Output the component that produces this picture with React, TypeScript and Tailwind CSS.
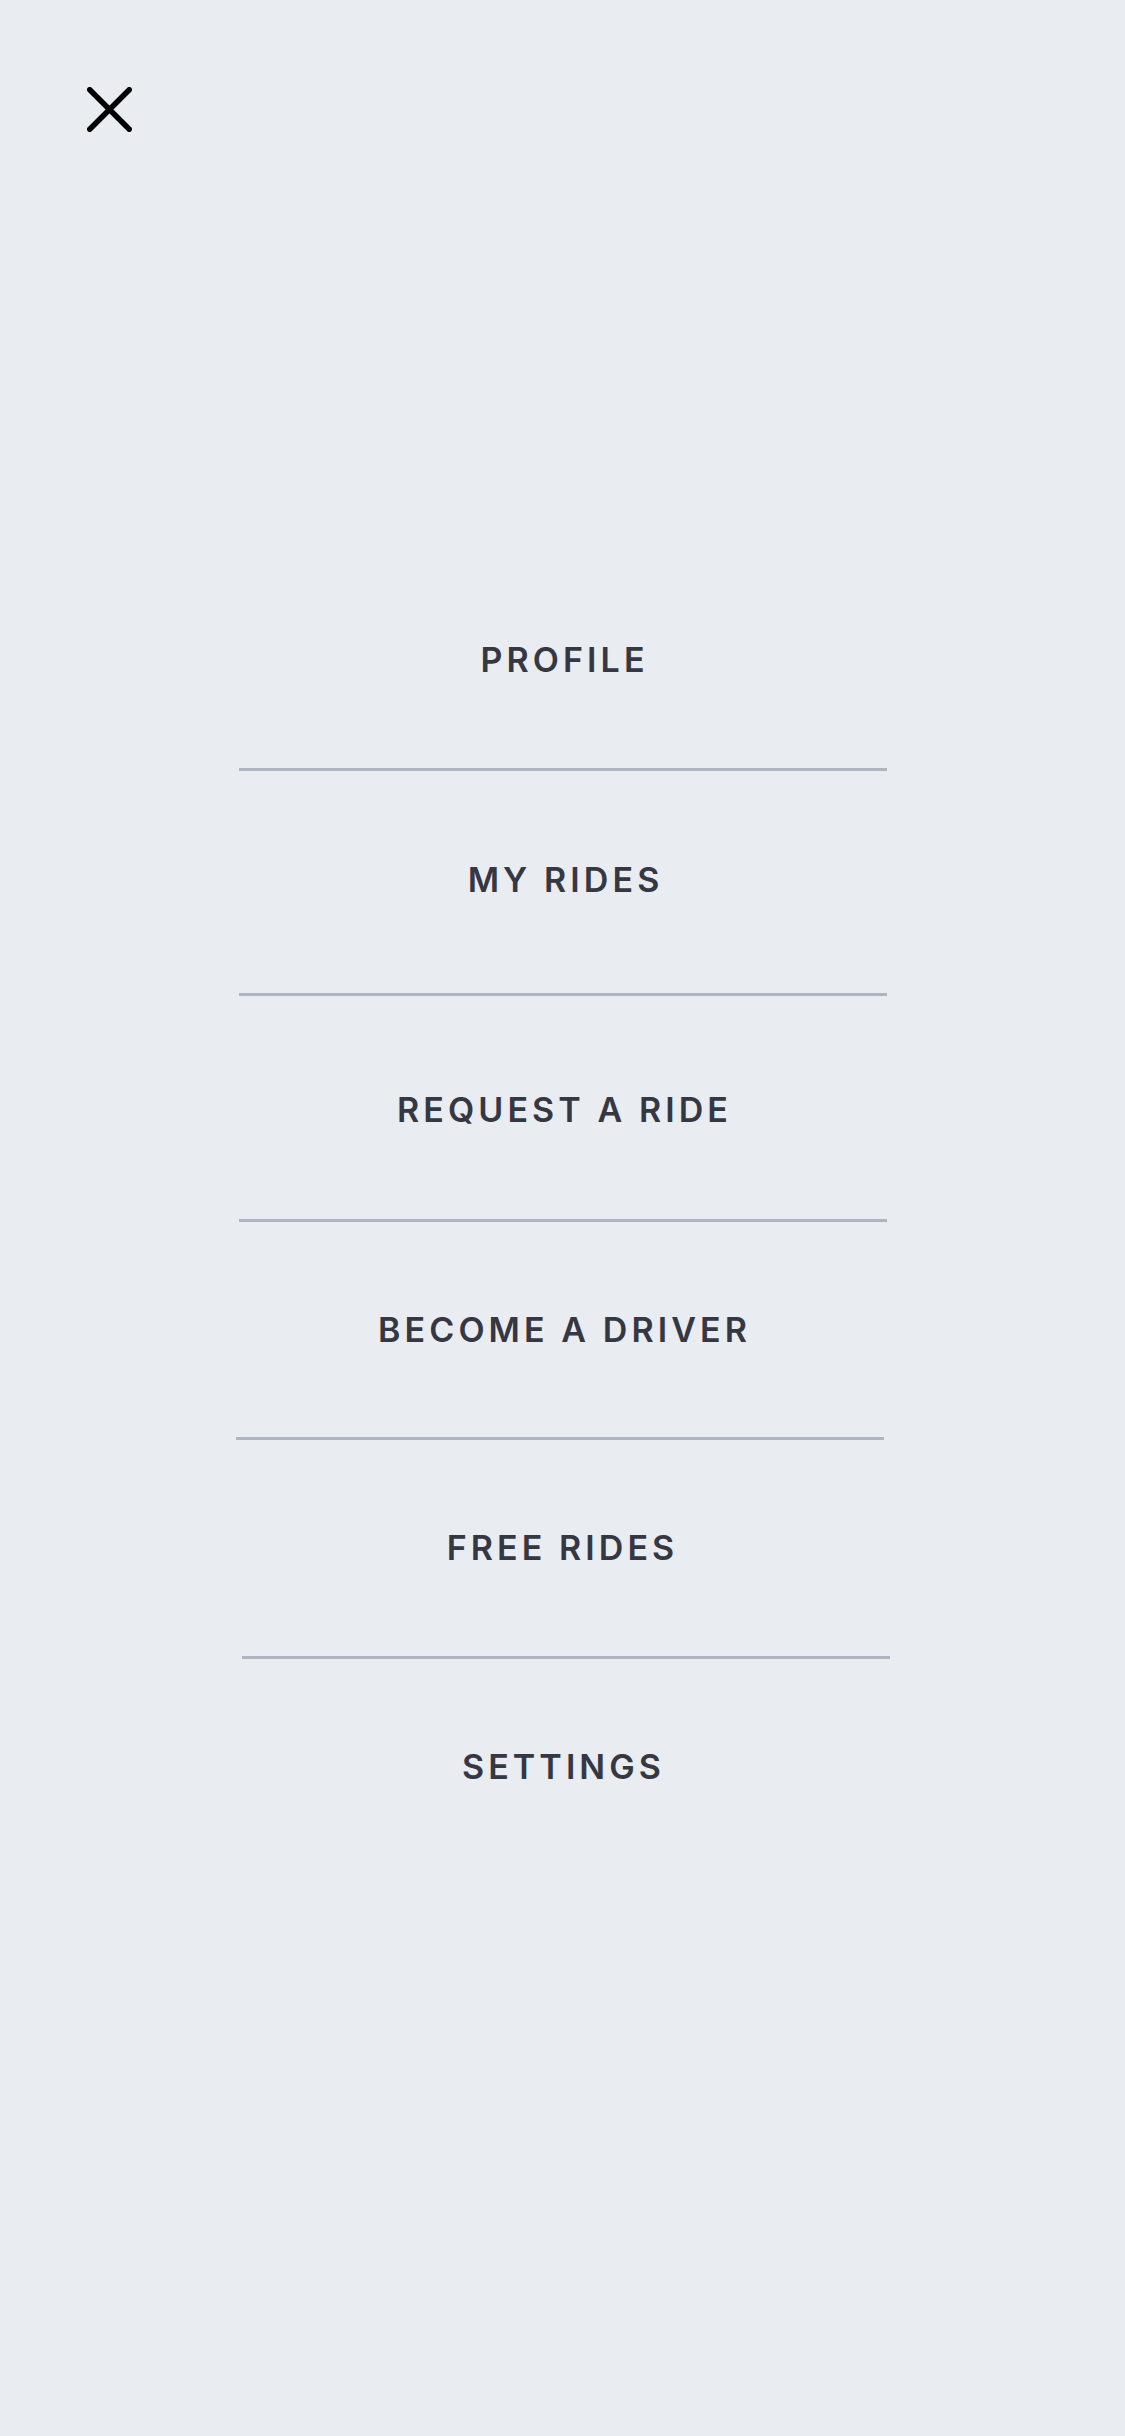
import React from 'react';

const items = [
  { label: 'PROFILE', pad: 'pt-[92px] pb-[91px]', text: '', line: '' },
  { label: 'MY RIDES', pad: 'pt-[92px] pb-[96px]', text: 'pl-[6px]', line: '' },
  { label: 'REQUEST A RIDE', pad: 'pt-[97px] pb-[92px]', text: '', line: '' },
  { label: 'BECOME A DRIVER', pad: 'pt-[91px] pb-[90px]', text: '', line: '-ml-[3px]' },
  { label: 'FREE RIDES', pad: 'pt-[91px] pb-[91px]', text: 'pr-[4px]', line: 'ml-[3px]' },
  { label: 'SETTINGS', pad: 'pt-[91px] pb-[92px]', text: 'pl-[2px]', line: '' },
];

const App = () => {
  return (
    <div
      className="min-h-[2436px] w-full bg-[#e9ecf1]"
      style={{ fontFamily: 'Inter, "Noto Sans", sans-serif' }}
    >
      <div className="pt-[87px] pl-[87px]">
        <button aria-label="Close menu" className="block w-[45px] h-[45px]">
          <svg width="45" height="45" viewBox="0 0 45 45" fill="none">
            <path
              d="M2.75 2.75L42.25 42.25M42.25 2.75L2.75 42.25"
              stroke="#000"
              strokeWidth="5.5"
              strokeLinecap="round"
            />
          </svg>
        </button>
      </div>

      <nav className="mx-auto mt-[419px] w-[648px]">
        {items.map((item, i) => (
          <div key={item.label}>
            <div className={`${item.pad} flex justify-center`}>
              <span
                className={`${item.text} block pl-[0.12em] text-[34px] leading-[34px] font-semibold tracking-[0.12em] text-[#353743]`}
              >
                {item.label}
              </span>
            </div>
            {i < items.length - 1 && (
              <div className={`${item.line} h-[3px] w-[648px] bg-[#aeb5c2]`} />
            )}
          </div>
        ))}
      </nav>
    </div>
  );
};

export default App;
